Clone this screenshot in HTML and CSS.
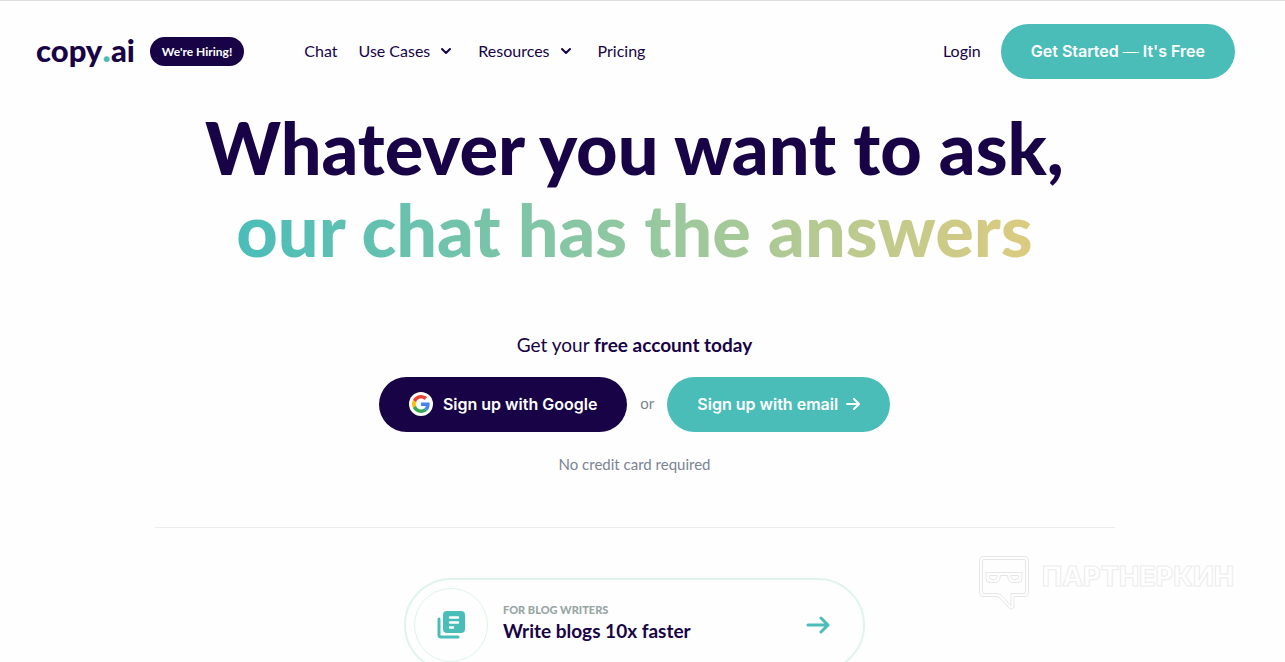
FILE: index.html
```html
<!DOCTYPE html>
<html lang="en">

	<head>
		<meta charset="UTF-8">
		<title>copy.ai</title>
		<link rel="stylesheet" href="styles.css">
	</head>

	<body>
		<header class="header">
			<a href="#" class="logo">copy<span>.</span>ai</a>
			<a href="#" class="hiring">We're Hiring!</a>
			<nav class="nav">
				<a href="#">Chat</a>
				<button type="button">Use Cases
					<svg width="12" height="10" viewBox="0 0 12 10"><path d="M2 4l4 4 4-4" /></svg>
				</button>
				<button type="button">Resources
					<svg width="12" height="10" viewBox="0 0 12 10"><path d="M2 4l4 4 4-4" /></svg>
				</button>
				<a href="#">Pricing</a>
			</nav>
			<a href="#" class="login">Login</a>
			<button type="button" class="btn">Get Started <span class="dash">—</span> It's Free</button>
		</header>

		<main>
			<h1>Whatever you want to ask,<br><span>our chat has the answers</span></h1>
			<p class="account">Get your <b>free account today</b></p>
			<div class="signup">
				<button type="button" class="btn dark">
					<svg width="24" height="24" viewBox="0 0 24 24">
						<circle cx="12" cy="12" r="12" fill="#fff" />
						<g transform="translate(3 3) scale(.375)">
							<path fill="#EA4335" d="M24 9.5c3.54 0 6.71 1.22 9.21 3.6l6.85-6.85C35.9 2.38 30.47 0 24 0 14.62 0 6.51 5.38 2.56 13.22l7.98 6.19C12.43 13.72 17.74 9.5 24 9.5z" />
							<path fill="#4285F4" d="M46.98 24.55c0-1.57-.15-3.09-.38-4.55H24v9.02h12.94c-.58 2.96-2.26 5.48-4.78 7.18l7.73 6c4.51-4.18 7.09-10.36 7.09-17.65z" />
							<path fill="#FBBC05" d="M10.53 28.59c-.48-1.45-.76-2.99-.76-4.59s.27-3.14.76-4.59l-7.98-6.19C.92 16.46 0 20.12 0 24c0 3.88.92 7.54 2.56 10.78l7.97-6.19z" />
							<path fill="#34A853" d="M24 48c6.48 0 11.93-2.13 15.89-5.81l-7.73-6c-2.15 1.45-4.92 2.3-8.16 2.3-6.26 0-11.57-4.22-13.47-9.91l-7.98 6.19C6.51 42.62 14.62 48 24 48z" />
						</g>
					</svg>
					Sign up with Google
				</button>
				<span class="or">or</span>
				<button type="button" class="btn">
					Sign up with email
					<svg class="arrow" width="14" height="12" viewBox="0 0 14 12"><path d="M1 6h12M8 1l5 5-5 5" /></svg>
				</button>
			</div>
			<p class="note">No credit card required</p>
			<hr>
			<a href="#" class="card">
				<span class="card-icon">
					<svg width="28" height="28" viewBox="0 0 28 28">
						<path fill="none" stroke="#4abdb9" stroke-width="3" stroke-linecap="round" d="M2 8v16q0 2 2 2h17" />
						<rect x="6" width="22" height="22" rx="4" fill="#4abdb9" />
						<path stroke="#fff" stroke-width="2.4" stroke-linecap="round" d="M13 6.500h8M13 11.500h8M13 16.500h3" />
					</svg>
				</span>
				<span class="card-text">
					<small>FOR BLOG WRITERS</small>
					<strong>Write blogs 10x faster</strong>
				</span>
				<svg class="go" width="24" height="18" viewBox="0 0 24 18"><path d="M2 9h20M15 2l7 7-7 7" /></svg>
			</a>
		</main>

		<div class="watermark">
			<svg width="50" height="54" viewBox="0 0 50 54">
				<path d="M5 .5h40q4.500 0 4.500 4.500v31q0 4.500-4.500 4.500H35V50q-1 5-5 2L22 43q-2-2.500-5-2.500H5Q.5 40.500.5 36V5Q.5.5 5 .5z" />
				<path d="M5 3.500h40q1.500 0 1.500 1.500v31q0 1.500-1.500 1.500H32V50l-8-9q-3-3.500-6-3.500H5q-1.500 0-1.500-1.500V5q0-1.500 1.500-1.500z" />
				<path d="M7 16.500h36v6q0 4-4 4h-5q-5 0-5.500-7h-7q-.5 7-5.500 7h-5q-4 0-4-4z" />
				<path d="M10.500 19.500h8q0 4-3 4h-3q-2 0-2-2zM31.500 19.500h8v2q0 2-2 2h-3q-3 0-3-4z" />
			</svg>
			<span lang="ru">ПАРТНЕРКИН</span>
		</div>
	</body>

</html>
```

FILE: styles.css
```css
* {
	margin: 0;
	padding: 0;
	box-sizing: border-box;
}

body {
	position: relative;
	min-height: 100vh;
	padding-right: 16px;
	border-top: 1px solid #dedede;
	background: #fefefe;
	color: #170345;
	font-family: "Lato", "Liberation Sans", sans-serif;
	font-size: 16px;
}

a {
	color: inherit;
	text-decoration: none;
}

button {
	border: 0;
	background: none;
	color: inherit;
	font: inherit;
	cursor: pointer;
}

.header {
	display: flex;
	align-items: center;
	padding: 23px 34px 0 36px;
}

.logo {
	padding-bottom: 6px;
	font-size: 31px;
	font-weight: 900;
	line-height: 32px;
}

.logo span {
	color: #4abdb9;
	font-size: 36px;
}

.hiring {
	margin-left: 15px;
	padding: 0 12px;
	border-radius: 15px;
	background: #170345;
	color: #fff;
	font-size: 12px;
	font-weight: 700;
	line-height: 29px;
}

.nav {
	display: flex;
	gap: 21px;
	margin-left: 60px;
	padding-bottom: 3px;
}

.nav button {
	display: flex;
	align-items: center;
	gap: 10px;
	padding-right: 5px;
}

.nav path,
.arrow path,
.go path {
	fill: none;
	stroke: currentColor;
	stroke-width: 2;
	stroke-linecap: round;
	stroke-linejoin: round;
}

.login {
	margin-left: auto;
	margin-right: 20px;
	padding-bottom: 3px;
}

.btn {
	display: flex;
	align-items: center;
	justify-content: center;
	height: 55px;
	padding: 0 30px 2px;
	border-radius: 28px;
	background: #4abdb9;
	color: #fff;
	font-family: "Inter", "Liberation Sans", sans-serif;
	font-size: 16px;
	font-weight: 600;
}

.dash {
	margin: 0 4px;
	font-weight: 300;
}

.dark {
	gap: 10px;
	background: #170345;
}

.arrow {
	margin-left: 8px;
}

h1 {
	margin-top: 27px;
	font-size: 72px;
	font-weight: 900;
	line-height: 82px;
	text-align: center;
}

h1 span {
	background: linear-gradient(90deg, #4abdb9, #93c8a0 50%, #dccb80);
	-webkit-background-clip: text;
	background-clip: text;
	color: transparent;
}

.account {
	margin-top: 63px;
	font-size: 19px;
	line-height: 24px;
	text-align: center;
}

.signup {
	display: flex;
	align-items: center;
	justify-content: center;
	gap: 13px;
	margin-top: 20px;
}

.or,
.note {
	color: #7b8494;
	font-size: 15px;
}

.or {
	padding-bottom: 3px;
}

.note {
	margin-top: 22px;
	line-height: 20px;
	text-align: center;
}

hr {
	max-width: 960px;
	margin: 53px auto 50px;
	border: 0;
	border-top: 1px solid #ebebeb;
}

.card {
	display: flex;
	align-items: center;
	max-width: 461px;
	margin: 0 auto;
	padding: 8px;
	border: 2px solid #e0f4ef;
	border-radius: 48px;
}

.card-icon {
	display: flex;
	align-items: center;
	justify-content: center;
	width: 74px;
	height: 74px;
	border: 1px solid #e0f4ef;
	border-radius: 50%;
}

.card-text {
	flex: 1;
	margin-left: 15px;
	padding-bottom: 6px;
}

.card-text small,
.card-text strong {
	display: block;
}

.card-text small {
	color: #98a5a3;
	font-size: 11px;
	font-weight: 900;
	line-height: 18px;
}

.card-text strong {
	font-size: 19px;
	font-weight: 700;
	line-height: 24px;
}

.go {
	margin-right: 25px;
	color: #4abdb9;
}

.go path {
	stroke-width: 3;
}

.watermark {
	position: absolute;
	top: 555px;
	right: 51px;
	display: flex;
	gap: 13px;
	color: #fff;
	font-family: "Inter", "Liberation Sans", sans-serif;
	font-size: 27px;
	font-weight: 800;
	line-height: 41px;
	-webkit-text-stroke: 1px #ececec;
}

.watermark path {
	fill: none;
	stroke: #e6e6e6;
}
```
